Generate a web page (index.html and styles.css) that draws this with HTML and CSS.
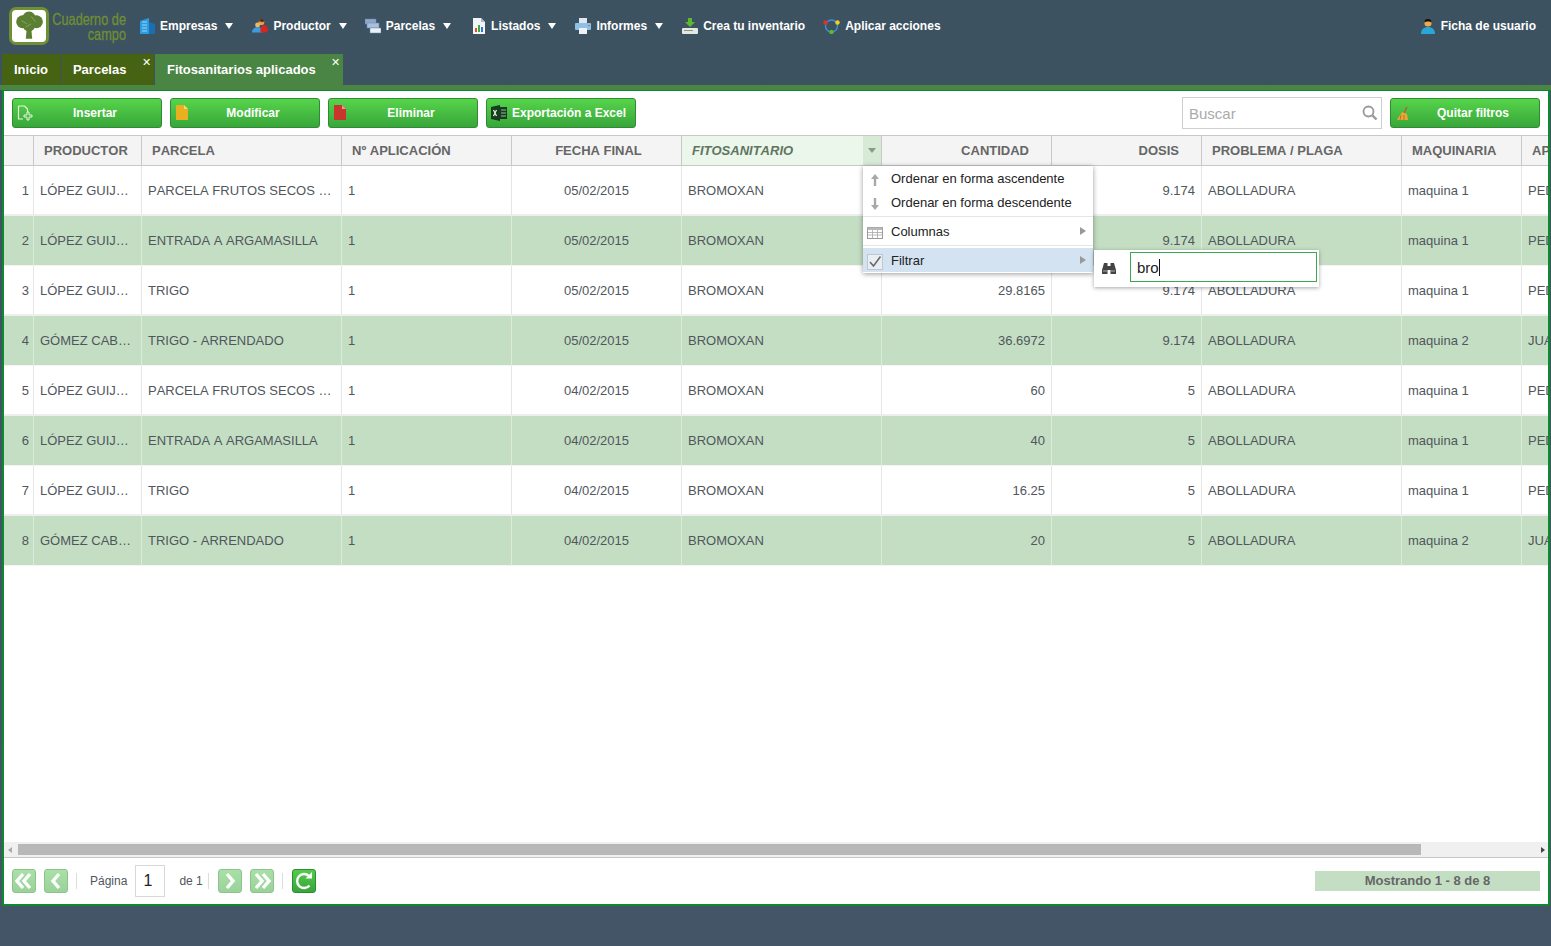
FILE: index.html
```html
<!DOCTYPE html>
<html lang="es">
<head>
    <meta charset="UTF-8">
    <title>Cuaderno de campo</title>
    <link rel="stylesheet" href="styles.css">
</head>
<body>

<header class="topbar">
    <div class="logo">
        <div class="logo-box">
            <svg width="32" height="32" viewBox="0 0 30 30">
                <path d="M13 16h4l1 11h-6z" fill="#5b7f33"/>
                <circle cx="9" cy="11" r="6" fill="#5b7f33"/>
                <circle cx="15" cy="8" r="6.5" fill="#5b7f33"/>
                <circle cx="22" cy="11" r="6" fill="#5b7f33"/>
                <circle cx="15" cy="14" r="6" fill="#5b7f33"/>
                <path d="M8 10l5 3M17 6l4 5M12 16l5-3" stroke="#8fae6a" stroke-width=".8" fill="none"/>
            </svg>
        </div>
        <div class="logo-text"><span>Cuaderno de</span><span>campo</span></div>
    </div>
    <nav class="menu-main">
        <a class="nav-item">
            <svg width="15" height="16" viewBox="0 0 15 16"><path d="M0 3l9-3v16H0z" fill="#2c9be0"/><path d="M9 4l6 2v10H9z" fill="#1b6fb0"/><path d="M2 4h5M2 7h5M2 10h5M2 13h5" stroke="#9bd6f7" stroke-width="1"/></svg>
            <span>Empresas</span><i class="caret"></i>
        </a>
        <a class="nav-item">
            <svg width="17" height="16" viewBox="0 0 18 16"><circle cx="11" cy="4" r="3" fill="#e5a24b"/><path d="M8 3l3-3 3 2-1 2z" fill="#5b2e12"/><circle cx="7" cy="7" r="2.6" fill="#f0b766"/><path d="M1 15c0-4 3-6 6-6s5 2 5 6z" fill="#3d9be0"/><path d="M10 12c0-3 2-5 4-5s4 3 4 6l-3 2h-5z" fill="#d8261f"/></svg>
            <span>Productor</span><i class="caret"></i>
        </a>
        <a class="nav-item">
            <svg width="16" height="16" viewBox="0 0 16 16"><rect x="0" y="1" width="11" height="5" fill="#8fa9cc" stroke="#6d89ad" stroke-width=".5"/><rect x="2" y="5" width="12" height="5" fill="#a9bfdc" stroke="#6d89ad" stroke-width=".5"/><rect x="5" y="10" width="11" height="5" fill="#e9f0f8" stroke="#6d89ad" stroke-width=".5"/></svg>
            <span>Parcelas</span><i class="caret"></i>
        </a>
        <a class="nav-item nav-listados">
            <svg width="14" height="16" viewBox="0 0 14 16"><path d="M1 0h8l4 4v12H1z" fill="#f1f4f8"/><path d="M9 0l4 4H9z" fill="#a8b8cc"/><rect x="3" y="10" width="2" height="4" fill="#e05030"/><rect x="6" y="7" width="2" height="7" fill="#3fa83f"/><rect x="9" y="9" width="2" height="5" fill="#2f78d0"/></svg>
            <span>Listados</span><i class="caret"></i>
        </a>
        <a class="nav-item nav-plus">
            <svg width="16" height="16" viewBox="0 0 16 16"><rect x="4" y="0" width="8" height="6" fill="#dfe6ee"/><rect x="0" y="5" width="16" height="7" rx="1" fill="#8fc0e6"/><rect x="4" y="10" width="8" height="6" fill="#eef2f6"/><rect x="13" y="7" width="2" height="1" fill="#e06030"/></svg>
            <span>Informes</span><i class="caret"></i>
        </a>
        <a class="nav-item nav-plus">
            <svg width="16" height="16" viewBox="0 0 16 16"><path d="M6 0h4v4h3l-5 5-5-5h3z" fill="#5cb82e"/><rect x="0" y="10" width="16" height="6" rx="1" fill="#e4e8e4"/><rect x="2" y="12" width="9" height="1" fill="#8a948a"/></svg>
            <span>Crea tu inventario</span>
        </a>
        <a class="nav-item">
            <svg width="17" height="16" viewBox="0 0 17 16"><circle cx="8.5" cy="8" r="6" fill="none" stroke="#3f8fd0" stroke-width="1.4"/><circle cx="2.5" cy="4.5" r="2.2" fill="#e0302a"/><circle cx="14.5" cy="4.5" r="2.2" fill="#f2d21f"/><circle cx="8.5" cy="14" r="2.2" fill="#5cb82e"/></svg>
            <span>Aplicar acciones</span>
        </a>
        <a class="nav-item nav-user">
            <svg width="16" height="16" viewBox="0 0 16 16"><path d="M1 16c0-5 3-7 7-7s7 2 7 7z" fill="#2aa6d8"/><circle cx="8" cy="5" r="3.6" fill="#f0a84f"/><path d="M4.4 4.5C4.500 1.500 6 1 8 1s3.500.5 3.600 3.500C10 3 6 3 4.400 4.500z" fill="#111"/></svg>
            <span>Ficha de usuario</span>
        </a>
    </nav>
</header>

<div class="tabs">
    <div class="tab">Inicio</div>
    <div class="tab tab-close">Parcelas<span class="x">✕</span></div>
    <div class="tab tab-close active">Fitosanitarios aplicados<span class="x">✕</span></div>
</div>
<div class="tab-strip"></div>

<main class="panel">
    <div class="toolbar">
        <a class="btn">
            <svg width="16" height="16" viewBox="0 0 16 16"><path d="M1.500 1h6l3 3v3M6 14H1.500V1" fill="none" stroke="#e8f5e0" stroke-width="1.200"/><path d="M10 7h2v3h3v2h-3v3h-2v-3H7v-2h3z" fill="none" stroke="#e8f5e0" stroke-width="1"/></svg>
            <span>Insertar</span>
        </a>
        <a class="btn">
            <svg width="16" height="16" viewBox="0 0 16 16"><path d="M1 0h8l4 4v11H1z" fill="#e8b020"/><path d="M9 0l4 4H9z" fill="#f6d878"/></svg>
            <span>Modificar</span>
        </a>
        <a class="btn">
            <svg width="16" height="16" viewBox="0 0 16 16"><path d="M1 0h8l4 4v11H1z" fill="#c8352c"/><path d="M9 0l4 4H9z" fill="#eb9a92"/></svg>
            <span>Eliminar</span>
        </a>
        <a class="btn">
            <svg width="16" height="16" viewBox="0 0 16 16"><path d="M0 2l9-2v16l-9-2z" fill="#173d1f"/><rect x="9" y="2" width="7" height="12" fill="#173d1f"/><path d="M10 5h5M10 8h5M10 11h5" stroke="#8fbf9a" stroke-width="1"/><path d="M2.500 5l3 6M5.500 5l-3 6" stroke="#e8f5e0" stroke-width="1.200"/></svg>
            <span>Exportación a Excel</span>
        </a>
        <div class="search">
            <span>Buscar</span>
            <svg width="16" height="16" viewBox="0 0 16 16"><circle cx="6.500" cy="6.500" r="5" fill="none" stroke="#999" stroke-width="1.800"/><path d="M10.500 10.500l4 4" stroke="#999" stroke-width="2.400"/></svg>
        </div>
        <a class="btn">
            <svg width="16" height="16" viewBox="0 0 16 16"><path d="M12 2L9 8" stroke="#b8602a" stroke-width="1.400"/><path d="M7 7l5 2 1 6H2z" fill="#e8a838"/><path d="M6 10l-1 5M9 10v5" stroke="#b8602a" stroke-width=".8"/></svg>
            <span>Quitar filtros</span>
        </a>
    </div>

    <div class="grid-wrap">
        <table class="grid">
            <colgroup>
                <col class="c-num"><col class="c-prod"><col class="c-parc"><col class="c-apl"><col class="c-fecha">
                <col class="c-fito"><col class="c-cant"><col class="c-dosis"><col class="c-plaga"><col class="c-maq"><col class="c-last">
            </colgroup>
            <thead>
                <tr>
                    <th></th>
                    <th>PRODUCTOR</th>
                    <th>PARCELA</th>
                    <th>Nº APLICACIÓN</th>
                    <th class="center">FECHA FINAL</th>
                    <th class="fito">
                        <div class="fito-in"><span>FITOSANITARIO</span><i class="trigger"></i></div>
                    </th>
                    <th class="right">CANTIDAD</th>
                    <th class="right">DOSIS</th>
                    <th>PROBLEMA / PLAGA</th>
                    <th>MAQUINARIA</th>
                    <th>APLICADOR</th>
                </tr>
            </thead>
            <tbody>
                <tr>
                    <td class="num">1</td><td>LÓPEZ GUIJ…</td><td>PARCELA FRUTOS SECOS …</td><td>1</td><td class="center">05/02/2015</td>
                    <td>BROMOXAN</td><td class="right"></td><td class="right">9.174</td><td>ABOLLADURA</td><td>maquina 1</td><td>PEDRO</td>
                </tr>
                <tr>
                    <td class="num">2</td><td>LÓPEZ GUIJ…</td><td>ENTRADA A ARGAMASILLA</td><td>1</td><td class="center">05/02/2015</td>
                    <td>BROMOXAN</td><td class="right"></td><td class="right">9.174</td><td>ABOLLADURA</td><td>maquina 1</td><td>PEDRO</td>
                </tr>
                <tr>
                    <td class="num">3</td><td>LÓPEZ GUIJ…</td><td>TRIGO</td><td>1</td><td class="center">05/02/2015</td>
                    <td>BROMOXAN</td><td class="right">29.8165</td><td class="right">9.174</td><td>ABOLLADURA</td><td>maquina 1</td><td>PEDRO</td>
                </tr>
                <tr>
                    <td class="num">4</td><td>GÓMEZ CAB…</td><td>TRIGO - ARRENDADO</td><td>1</td><td class="center">05/02/2015</td>
                    <td>BROMOXAN</td><td class="right">36.6972</td><td class="right">9.174</td><td>ABOLLADURA</td><td>maquina 2</td><td>JUAN</td>
                </tr>
                <tr>
                    <td class="num">5</td><td>LÓPEZ GUIJ…</td><td>PARCELA FRUTOS SECOS …</td><td>1</td><td class="center">04/02/2015</td>
                    <td>BROMOXAN</td><td class="right">60</td><td class="right">5</td><td>ABOLLADURA</td><td>maquina 1</td><td>PEDRO</td>
                </tr>
                <tr>
                    <td class="num">6</td><td>LÓPEZ GUIJ…</td><td>ENTRADA A ARGAMASILLA</td><td>1</td><td class="center">04/02/2015</td>
                    <td>BROMOXAN</td><td class="right">40</td><td class="right">5</td><td>ABOLLADURA</td><td>maquina 1</td><td>PEDRO</td>
                </tr>
                <tr>
                    <td class="num">7</td><td>LÓPEZ GUIJ…</td><td>TRIGO</td><td>1</td><td class="center">04/02/2015</td>
                    <td>BROMOXAN</td><td class="right">16.25</td><td class="right">5</td><td>ABOLLADURA</td><td>maquina 1</td><td>PEDRO</td>
                </tr>
                <tr>
                    <td class="num">8</td><td>GÓMEZ CAB…</td><td>TRIGO - ARRENDADO</td><td>1</td><td class="center">04/02/2015</td>
                    <td>BROMOXAN</td><td class="right">20</td><td class="right">5</td><td>ABOLLADURA</td><td>maquina 2</td><td>JUAN</td>
                </tr>
            </tbody>
        </table>
    </div>

    <div class="hscroll">
        <i class="arr-left"></i>
        <div class="thumb"></div>
        <i class="arr-right"></i>
    </div>

    <div class="pager">
        <a class="pg off"><svg width="22" height="22" viewBox="0 0 22 22"><path d="M10 4l-6 7 6 7M17 4l-6 7 6 7" fill="none" stroke="#fff" stroke-width="3.400"/></svg></a>
        <a class="pg off"><svg width="22" height="22" viewBox="0 0 22 22"><path d="M14 4l-6 7 6 7" fill="none" stroke="#fff" stroke-width="3.400"/></svg></a>
        <i class="sep sep-first"></i>
        <span class="pg-label">Página</span>
        <div class="pg-input">1</div>
        <span class="pg-label pg-de">de 1</span>
        <i class="sep"></i>
        <a class="pg off"><svg width="22" height="22" viewBox="0 0 22 22"><path d="M8 4l6 7-6 7" fill="none" stroke="#fff" stroke-width="3.400"/></svg></a>
        <a class="pg off"><svg width="22" height="22" viewBox="0 0 22 22"><path d="M5 4l6 7-6 7M12 4l6 7-6 7" fill="none" stroke="#fff" stroke-width="3.400"/></svg></a>
        <i class="sep"></i>
        <a class="pg refresh"><svg width="22" height="22" viewBox="0 0 22 22"><path d="M16.500 15.500A7 7 0 1 1 16 6" fill="none" stroke="#fff" stroke-width="2.400"/><path d="M12.500 8.500h6.500V2z" fill="#fff"/></svg></a>
        <div class="showing">Mostrando 1 - 8 de 8</div>
    </div>
</main>

<!-- menu de la columna -->
<div class="col-menu">
    <div class="mi">
        <svg width="12" height="14" viewBox="0 0 12 14"><path d="M6 1l4 5H7.200v7H4.800V6H2z" fill="#a8a8a8"/></svg>
        <span>Ordenar en forma ascendente</span>
    </div>
    <div class="mi">
        <svg width="12" height="14" viewBox="0 0 12 14"><path d="M6 13l4-5H7.200V1H4.800v7H2z" fill="#a8a8a8"/></svg>
        <span>Ordenar en forma descendente</span>
    </div>
    <div class="mi-sep"></div>
    <div class="mi">
        <svg width="16" height="14" viewBox="0 0 16 14"><rect x=".5" y="1.500" width="15" height="11" fill="#fff" stroke="#9a9a9a"/><rect x=".5" y="1.500" width="15" height="2.500" fill="#b8b8b8"/><path d="M5.500 4v8M10.500 4v8M1 6.500h14M1 9h14" stroke="#a8a8a8" stroke-width=".8"/></svg>
        <span>Columnas</span><i class="mi-arrow"></i>
    </div>
    <div class="mi-sep"></div>
    <div class="mi mi-on">
        <svg width="16" height="16" viewBox="0 0 16 16"><rect x=".5" y=".5" width="15" height="15" fill="#e9eef3" stroke="#bfc8d0"/><path d="M3 8l3.500 4L13.500 2.500" fill="none" stroke="#666" stroke-width="1.500"/></svg>
        <span>Filtrar</span><i class="mi-arrow"></i>
    </div>
</div>

<div class="filter-menu">
    <svg width="14" height="12" viewBox="0 0 14 12"><path d="M2 1h3.500v3h3V1H12l2 7v4H8.500V8h-3v4H0V8z" fill="#444"/><path d="M1 9h4M9 9h4" stroke="#ccc" stroke-width=".8"/></svg>
    <div class="filter-input"><span>bro</span></div>
</div>

</body>
</html>
```

FILE: styles.css
```css
* {
    box-sizing: border-box;
}

html, body {
    height: 100%;
}

body {
    margin: 0;
    display: flex;
    flex-direction: column;
    overflow: hidden;
    background: linear-gradient(#3d5261, #435566);
    font-family: "Liberation Sans", Arial, sans-serif;
    font-size: 13px;
    font-kerning: none;
    color: #50565c;
}

/* barra superior */
.topbar {
    display: flex;
    align-items: flex-start;
    height: 54px;
    flex: none;
}

.logo {
    display: flex;
    gap: 3px;
    width: 140px;
    padding: 7px 0 0 9px;
    flex: none;
}

.logo-box {
    width: 40px;
    height: 38px;
    background: #fff;
    border: 3px solid #6f8f34;
    border-radius: 7px;
    display: flex;
    align-items: center;
    justify-content: center;
}

.logo-text {
    display: flex;
    flex-direction: column;
    align-items: flex-end;
    width: 74px;
    padding-top: 5px;
    font-size: 17px;
    line-height: 15px;
    color: #6f8f34;
    -webkit-text-stroke: .3px #6f8f34;
    white-space: nowrap;
    transform: scaleX(.75);
    transform-origin: right;
}

.menu-main {
    display: flex;
    flex: 1;
    align-items: center;
    gap: 18px;
    height: 52px;
    padding-right: 15px;
}

.nav-item {
    display: flex;
    align-items: center;
    gap: 5px;
    font-size: 12px;
    font-weight: bold;
    color: #fff;
}

.nav-listados {
    margin-left: 3px;
}

.nav-plus {
    margin-left: 1px;
}

.nav-user {
    margin-left: auto;
}

.caret {
    width: 0;
    height: 0;
    margin-left: 3px;
    border: 4.5px solid transparent;
    border-top: 6px solid #fff;
    border-bottom: 0;
}

/* pestañas */
.tabs {
    display: flex;
    gap: 1px;
    height: 31px;
    padding-left: 2px;
    flex: none;
}

.tab {
    display: flex;
    align-items: center;
    padding: 0 12px;
    background: #456312;
    color: #fff;
    font-size: 13px;
    font-weight: bold;
    position: relative;
}

.tab-close {
    width: 93px;
}

.tab.active {
    width: 188px;
    background: #4a8544;
}

.x {
    position: absolute;
    top: 2px;
    right: 3px;
    font-size: 11px;
    font-weight: normal;
}

.tab-strip {
    height: 5px;
    flex: none;
    background: #4a8544;
}

/* panel principal */
.panel {
    flex: 1;
    display: flex;
    flex-direction: column;
    min-height: 0;
    margin: 0 1px 40px 2px;
    background: #fff;
    border: 2px solid #0d8a2f;
    border-top-width: 1px;
}

.toolbar {
    display: flex;
    gap: 8px;
    height: 44px;
    padding: 7px 8px 0 8px;
    flex: none;
}

.btn {
    display: flex;
    align-items: center;
    width: 150px;
    height: 30px;
    padding: 0 4px;
    background: linear-gradient(#56d44b, #38a63a);
    border: 1px solid #2f8a34;
    border-radius: 3px;
    color: #fff;
    font-size: 12px;
    font-weight: bold;
}

.btn span {
    flex: 1;
    text-align: center;
}

.search {
    display: flex;
    align-items: center;
    justify-content: space-between;
    width: 200px;
    height: 32px;
    margin: -1px 0 0 auto;
    padding: 0 3px 0 6px;
    border: 1px solid #cfcfcf;
    font-size: 15px;
    color: #aaa;
}

/* tabla */
.grid-wrap {
    flex: 1;
    min-height: 0;
    overflow: hidden;
}

.grid {
    width: 1638px;
    table-layout: fixed;
    border-collapse: separate;
    border-spacing: 0;
}

.c-num { width: 30px; }
.c-prod { width: 108px; }
.c-parc { width: 200px; }
.c-apl { width: 170px; }
.c-fecha { width: 170px; }
.c-fito { width: 200px; }
.c-cant { width: 170px; }
.c-dosis { width: 150px; }
.c-plaga { width: 200px; }
.c-maq { width: 120px; }
.c-last { width: 120px; }

.grid th {
    height: 31px;
    padding: 0 10px;
    background: #f4f4f4;
    border-top: 1px solid #c8c8c8;
    border-bottom: 1px solid #c8c8c8;
    border-right: 1px solid #c8c8c8;
    color: #666;
    font-size: 13px;
    font-weight: bold;
    text-align: left;
    white-space: nowrap;
}

.grid th.right {
    padding-right: 22px;
    text-align: right;
}

.grid th.center {
    padding-left: 14px;
    text-align: center;
}

.grid th.fito {
    padding: 0;
    background: #ebf7eb;
    font-style: italic;
    color: #5f7560;
}

.fito-in {
    display: flex;
    align-items: center;
    justify-content: space-between;
    height: 29px;
    padding-left: 10px;
}

.trigger {
    display: flex;
    align-items: center;
    justify-content: center;
    width: 18px;
    height: 29px;
    background: #d6ead6;
}

.trigger::after {
    content: "";
    border: 4px solid transparent;
    border-top: 5px solid #8a9a8a;
    border-bottom: 0;
}

.grid td {
    height: 50px;
    padding: 0 6px;
    border-right: 1px solid #e6e6e6;
    white-space: nowrap;
    overflow: hidden;
}

.grid tbody tr:nth-child(odd) td {
    border-bottom: 2px solid #eeeeee;
}

.grid tbody tr:nth-child(even) td {
    background: #c4dec4;
    border-right-color: #dcebdc;
    border-bottom: 1px solid #f4f4f4;
}

.grid td.num,
.grid td.right {
    text-align: right;
}

.grid td.num {
    padding-right: 4px;
}

.grid td.center {
    text-align: center;
}

.hscroll {
    display: flex;
    align-items: center;
    height: 16px;
    padding: 0 3px 0 4px;
    flex: none;
    background: #f0f0f0;
    border-bottom: 1px solid #c8c8c8;
}

.thumb {
    width: 1403px;
    height: 11px;
    margin-left: 6px;
    background: #b8b8b8;
}

.arr-left {
    border: 3.500px solid transparent;
    border-right: 4px solid #aaa;
    border-left: 0;
}

.arr-right {
    margin-left: auto;
    border: 3.500px solid transparent;
    border-left: 4px solid #444;
    border-right: 0;
}

/* paginador */
.pager {
    display: flex;
    align-items: center;
    flex: 1 0 46px;
    max-height: 46px;
    padding: 0 8px;
    font-size: 12px;
    color: #50565c;
}

.pg {
    display: flex;
    align-items: center;
    justify-content: center;
    width: 24px;
    height: 24px;
    margin-right: 8px;
    border-radius: 3px;
}

.pg.off {
    background: linear-gradient(#a8e0a8, #9ad29a);
    border: 1px solid #8cc48c;
}

.pg.refresh {
    background: linear-gradient(#52cc4a, #38a63a);
    border: 1px solid #2f8a34;
}

.sep {
    width: 1px;
    height: 16px;
    margin-right: 9px;
    background: #ddd;
}

.sep-first {
    margin-right: 13px;
}

.pg-label {
    margin-right: 8px;
}

.pg-input {
    display: flex;
    align-items: center;
    width: 30px;
    height: 32px;
    margin-right: 14px;
    padding-left: 7px;
    border: 1px solid #d8d8d8;
    font-size: 16px;
    color: #222;
}

.pg-label.pg-de {
    margin-right: 5px;
}

.showing {
    width: 225px;
    height: 20px;
    margin-left: auto;
    background: #c4dec4;
    color: #666;
    font-size: 13px;
    font-weight: bold;
    line-height: 20px;
    text-align: center;
}

/* menus desplegados */
.col-menu {
    position: absolute;
    top: 166px;
    left: 863px;
    width: 230px;
    height: 107px;
    background: #fff;
    box-shadow: 0 1px 5px rgba(0, 0, 0, .4);
    color: #222;
}

.mi {
    display: flex;
    align-items: center;
    height: 24px;
    padding: 0 5px 0 4px;
}

.mi svg {
    flex: none;
    margin-top: 4px;
}

.mi span {
    margin-left: 8px;
}

.mi > svg:first-child {
    width: 16px;
}

.mi-sep {
    height: 1px;
    margin: 2px 0 2px 0;
    background: #e6e6e6;
}

.mi-on {
    background: #d3e3f2;
}

.mi-arrow {
    margin-left: auto;
    margin-right: 2px;
    border: 4px solid transparent;
    border-left: 6px solid #999;
    border-right: 0;
}

.filter-menu {
    position: absolute;
    top: 250px;
    left: 1094px;
    display: flex;
    align-items: flex-start;
    width: 225px;
    height: 37px;
    padding: 2px 2px 0 8px;
    background: #fff;
    box-shadow: 0 1px 4px rgba(0, 0, 0, .35);
}

.filter-menu svg {
    margin-top: 10px;
}

.filter-input {
    display: flex;
    align-items: center;
    width: 187px;
    height: 30px;
    margin-left: 14px;
    padding-left: 6px;
    border: 1px solid #3aa84f;
    font-size: 15px;
    color: #222;
}

.filter-input span {
    border-right: 1px solid #111;
}
```
